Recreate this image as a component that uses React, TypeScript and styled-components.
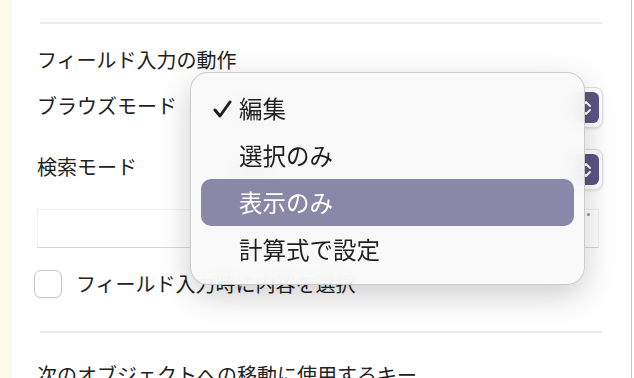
import styled, { createGlobalStyle } from 'styled-components';

const GlobalStyle = createGlobalStyle`
  html, body {
    margin: 0;
    padding: 0;
    background: #ffffff;
  }
  body {
    font-family: "Noto Sans CJK JP", "Noto Sans", sans-serif;
    color: #222222;
  }
`;

const Window = styled.div`
  display: flex;
  align-items: flex-start;
  width: 634px;
  height: 378px;
  overflow: hidden;
`;

const SideStrip = styled.div`
  align-self: stretch;
  width: 12px;
  flex-shrink: 0;
  background: #fcfbee;
`;

const Panel = styled.div`
  position: relative;
  width: 620px;
  min-height: 420px;
  flex-shrink: 0;
  border-right: 1px solid #c9c9c9;
  box-sizing: border-box;
  padding: 22px 0 0 25px;
  display: flex;
  flex-direction: column;

  & > * {
    flex-shrink: 0;
  }
`;

const Separator = styled.div<{ $gapTop?: number }>`
  height: 2px;
  margin: ${({ $gapTop = 0 }) => $gapTop}px 29px 0 3px;
  background: #ebebeb;
`;

const Label = styled.div<{ $gapTop?: number }>`
  font-size: 20px;
  line-height: 24px;
  margin-top: ${({ $gapTop = 0 }) => $gapTop}px;
  white-space: nowrap;
`;

const Row = styled.div<{ $gapTop: number }>`
  display: flex;
  align-items: center;
  height: 41px;
  margin-top: ${({ $gapTop }) => $gapTop}px;
  padding-right: 28px;
`;

const RowLabel = styled.div<{ $lift?: number }>`
  font-size: 20px;
  line-height: 24px;
  width: 159px;
  white-space: nowrap;
  transform: translateY(${({ $lift = 0 }) => -$lift}px);
`;

const Select = styled.div`
  flex: 1;
  height: 41px;
  box-sizing: border-box;
  display: flex;
  align-items: center;
  justify-content: space-between;
  padding: 0 3px 0 34px;
  background: #ffffff;
  border: 1px solid #e2e2e2;
  border-radius: 8px;
  box-shadow: 0 1px 3px rgba(0, 0, 0, 0.12);
  font-size: 20px;
  color: #333;
`;

const Stepper = styled.div`
  width: 26px;
  height: 31px;
  border-radius: 6px;
  background: #5b5683;
  display: flex;
  align-items: center;
  justify-content: center;
`;

const TextField = styled.div`
  position: relative;
  height: 39px;
  margin: 19px 32px 0 0;
  box-sizing: border-box;
  border: 1px solid #f1f1f1;
  border-bottom: 1px solid #d9d9d9;
  background: #ffffff;
`;

const Grip = styled.div`
  position: absolute;
  right: 8px;
  top: 3px;
  display: flex;
  gap: 2px;
  align-items: flex-end;
`;

const GripDot = styled.span<{ $size: number }>`
  width: ${({ $size }) => $size}px;
  height: ${({ $size }) => $size}px;
  border-radius: 50%;
  background: #9a9a9a;
`;

const CheckRow = styled.label`
  display: flex;
  align-items: center;
  gap: 14px;
  margin: 22px 0 0 -3px;
  font-size: 20px;
  line-height: 24px;
  white-space: nowrap;
`;

const CheckBox = styled.span`
  width: 28px;
  height: 28px;
  box-sizing: border-box;
  border: 1px solid #c9c9c9;
  border-radius: 7px;
  background: #ffffff;
  box-shadow: 0 1px 1px rgba(0, 0, 0, 0.06);
`;

const Menu = styled.div`
  position: absolute;
  left: 178px;
  top: 72px;
  width: 395px;
  height: 213px;
  box-sizing: border-box;
  padding: 11px 10px;
  border-radius: 18px;
  border: 1px solid rgba(0, 0, 0, 0.18);
  background: rgba(249, 249, 249, 0.93);
  backdrop-filter: blur(10px);
  box-shadow: 0 10px 32px rgba(0, 0, 0, 0.2);
  display: flex;
  flex-direction: column;
`;

const MenuItem = styled.div<{ $active?: boolean }>`
  position: relative;
  height: 48px;
  display: flex;
  align-items: center;
  padding-left: 38px;
  border-radius: 10px;
  font-size: 23.5px;
  color: ${({ $active }) => ($active ? '#ffffff' : '#1f1f1f')};
  background: ${({ $active }) => ($active ? '#8b87a8' : 'transparent')};
  white-space: nowrap;
`;

const CheckMark = styled.svg`
  position: absolute;
  left: 12px;
  top: 16px;
`;

const Chevrons = () => (
  <svg width="14" height="20" viewBox="0 0 14 20" fill="none">
    <path d="M3 8 L7 4 L11 8" stroke="#ffffff" strokeWidth="2" strokeLinecap="round" strokeLinejoin="round" />
    <path d="M3 12 L7 16 L11 12" stroke="#ffffff" strokeWidth="2" strokeLinecap="round" strokeLinejoin="round" />
  </svg>
);

const menuItems = ['編集', '選択のみ', '表示のみ', '計算式で設定'];

export default function App() {
  return (
    <>
      <GlobalStyle />
      <Window>
        <SideStrip />
        <Panel>
          <Separator />
          <Label $gapTop={24}>フィールド入力の動作</Label>
          <Row $gapTop={15}>
            <RowLabel $lift={2}>ブラウズモード</RowLabel>
            <Select>
              <span>編集</span>
              <Stepper>
                <Chevrons />
              </Stepper>
            </Select>
          </Row>
          <Row $gapTop={21}>
            <RowLabel $lift={3}>検索モード</RowLabel>
            <Select>
              <span>編集</span>
              <Stepper>
                <Chevrons />
              </Stepper>
            </Select>
          </Row>
          <TextField>
            <Grip>
              <GripDot $size={2} />
              <GripDot $size={3} />
            </Grip>
          </TextField>
          <CheckRow>
            <CheckBox />
            フィールド入力時に内容を選択
          </CheckRow>
          <Separator $gapTop={33} />
          <Label $gapTop={30}>次のオブジェクトへの移動に使用するキー</Label>

          <Menu>
            {menuItems.map((item, i) => (
              <MenuItem key={item} $active={i === 2}>
                {i === 0 && (
                  <CheckMark width="19" height="18" viewBox="0 0 19 18" fill="none">
                    <path d="M2 10 L7 16 L17 2" stroke="#1f1f1f" strokeWidth="3" strokeLinecap="round" strokeLinejoin="round" />
                  </CheckMark>
                )}
                {item}
              </MenuItem>
            ))}
          </Menu>
        </Panel>
      </Window>
    </>
  );
}
